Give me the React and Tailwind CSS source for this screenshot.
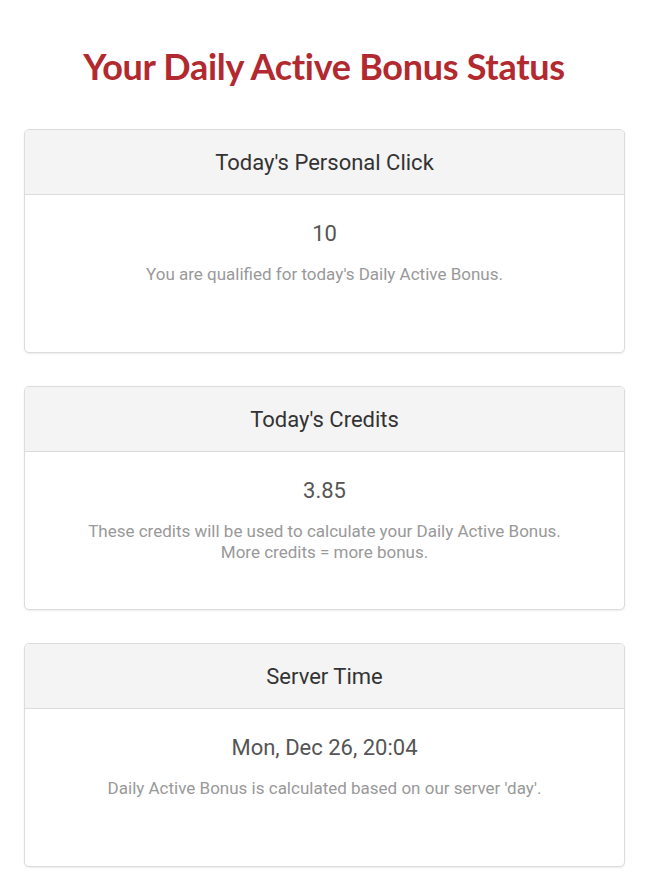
import React from 'react';

const cards = [
  {
    title: "Today's Personal Click",
    value: '10',
    note: ["You are qualified for today's Daily Active Bonus."],
  },
  {
    title: "Today's Credits",
    value: '3.85',
    note: ['These credits will be used to calculate your Daily Active Bonus.', 'More credits = more bonus.'],
  },
  {
    title: 'Server Time',
    value: 'Mon, Dec 26, 20:04',
    note: ["Daily Active Bonus is calculated based on our server 'day'."],
  },
];

export default function App() {
  return (
    <div className="min-h-screen bg-white px-[24px] pt-[42px] pb-[20px] font-['Roboto',sans-serif]">
      <h1 className="text-center text-[36px] leading-[48px] font-bold text-[#b22a2f] font-['Lato',sans-serif] tracking-[-0.3px]">
        Your Daily Active Bonus Status
      </h1>

      <div className="mt-[39px] flex flex-col gap-[33px]">
        {cards.map((card) => (
          <div
            key={card.title}
            className="w-[601px] rounded-[5px] border border-[#dcdcdc] bg-white shadow-[0_1px_2px_rgba(0,0,0,0.08)] overflow-hidden"
          >
            {/* Header */}
            <div className="h-[65px] flex items-center justify-center bg-[#f4f4f4] border-b border-[#dcdcdc]">
              <h2 className="text-[22px] text-[#333]">{card.title}</h2>
            </div>

            {/* Body */}
            <div className="h-[157px] pt-[24px] text-center">
              <p className="text-[22px] leading-[30px] text-[#555]">{card.value}</p>
              <div className="mt-[15px] text-[17px] leading-[21px] text-[#999]">
                {card.note.map((line) => (
                  <p key={line}>{line}</p>
                ))}
              </div>
            </div>
          </div>
        ))}
      </div>
    </div>
  );
}
